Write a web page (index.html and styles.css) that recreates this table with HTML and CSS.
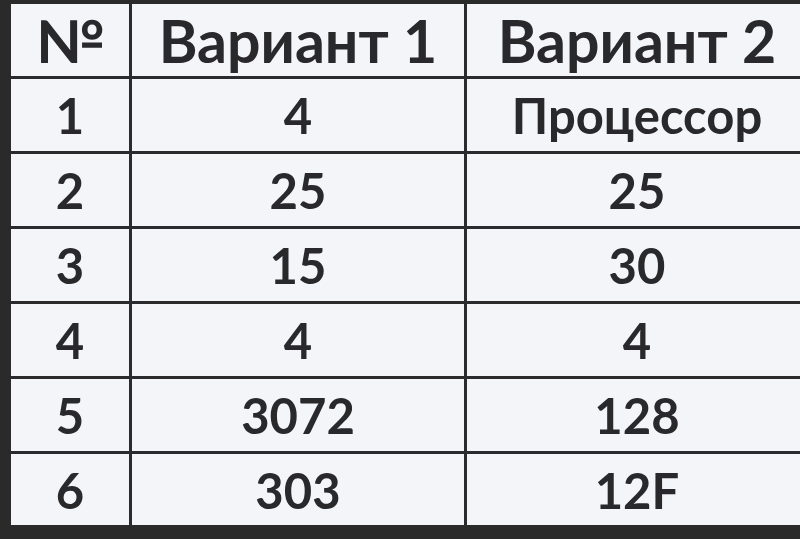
FILE: index.html
```
<!DOCTYPE html>
<html lang="ru">
<head>
<meta charset="utf-8">
<link rel="stylesheet" href="styles.css">
</head>
<body>
<div class="frame">
  <div class="grid">
    <div class="cell head">№</div>
    <div class="cell head">Вариант 1</div>
    <div class="cell head">Вариант 2</div>
    <div class="cell">1</div><div class="cell">4</div><div class="cell">Процессор</div>
    <div class="cell">2</div><div class="cell">25</div><div class="cell">25</div>
    <div class="cell">3</div><div class="cell">15</div><div class="cell">30</div>
    <div class="cell">4</div><div class="cell">4</div><div class="cell">4</div>
    <div class="cell">5</div><div class="cell">3072</div><div class="cell">128</div>
    <div class="cell">6</div><div class="cell">303</div><div class="cell">12F</div>
  </div>
</div>
</body>
</html>
```
FILE: styles.css
```
html, body {
  margin: 0;
  padding: 0;
  width: 800px;
  height: 539px;
  overflow: hidden;
  background: #2a2a2b;
}
.frame {
  padding: 4px 0 0 11px;
  width: 800px;
}
.grid {
  display: grid;
  grid-template-columns: 118px 332px 340px;
  grid-template-rows: 72px 72px 72px 72px 72px 72px 71px;
  gap: 3px;
  background: #2b2b2d;
}
.cell {
  background: #f4f5f9;
  display: flex;
  align-items: center;
  justify-content: center;
  font-family: Lato, "Open Sans", sans-serif;
  font-weight: 700;
  font-size: 49px;
  color: #29292b;
}
.head {
  font-size: 59px;
}
```
